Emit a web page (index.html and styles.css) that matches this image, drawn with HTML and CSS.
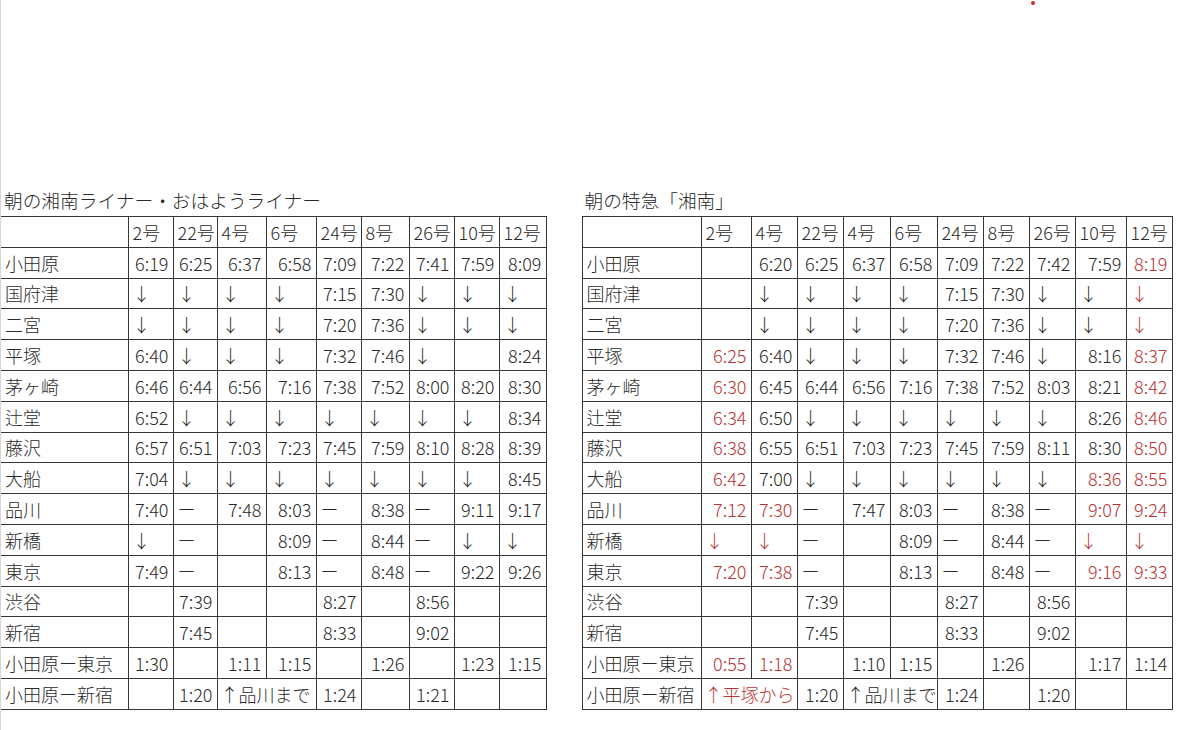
FILE: index.html
```html
<!DOCTYPE html>
<html lang="ja">
<head>
<meta charset="utf-8">
<link rel="stylesheet" href="styles.css">
</head>
<body>
<div class="page">
  <span class="dot"></span>
  <div class="sheet">
    <section class="block block-left">
      <div class="title">朝の湘南ライナー・おはようライナー</div>
      <table class="tt tt-left">
        <colgroup>
          <col style="width:127px"><col style="width:45px"><col style="width:44px"><col style="width:49px"><col style="width:50px"><col style="width:45px"><col style="width:48px"><col style="width:45px"><col style="width:45px"><col style="width:47px">
        </colgroup>
        <tr><td></td><td>2号</td><td>22号</td><td>4号</td><td>6号</td><td>24号</td><td>8号</td><td>26号</td><td>10号</td><td>12号</td></tr>
        <tr><td>小田原</td><td class="n">6:19</td><td class="n">6:25</td><td class="n">6:37</td><td class="n">6:58</td><td class="n">7:09</td><td class="n">7:22</td><td class="n">7:41</td><td class="n">7:59</td><td class="n">8:09</td></tr>
        <tr><td>国府津</td><td>↓</td><td>↓</td><td>↓</td><td>↓</td><td class="n">7:15</td><td class="n">7:30</td><td>↓</td><td>↓</td><td>↓</td></tr>
        <tr><td>二宮</td><td>↓</td><td>↓</td><td>↓</td><td>↓</td><td class="n">7:20</td><td class="n">7:36</td><td>↓</td><td>↓</td><td>↓</td></tr>
        <tr><td>平塚</td><td class="n">6:40</td><td>↓</td><td>↓</td><td>↓</td><td class="n">7:32</td><td class="n">7:46</td><td>↓</td><td></td><td class="n">8:24</td></tr>
        <tr><td>茅ヶ崎</td><td class="n">6:46</td><td class="n">6:44</td><td class="n">6:56</td><td class="n">7:16</td><td class="n">7:38</td><td class="n">7:52</td><td class="n">8:00</td><td class="n">8:20</td><td class="n">8:30</td></tr>
        <tr><td>辻堂</td><td class="n">6:52</td><td>↓</td><td>↓</td><td>↓</td><td>↓</td><td>↓</td><td>↓</td><td>↓</td><td class="n">8:34</td></tr>
        <tr><td>藤沢</td><td class="n">6:57</td><td class="n">6:51</td><td class="n">7:03</td><td class="n">7:23</td><td class="n">7:45</td><td class="n">7:59</td><td class="n">8:10</td><td class="n">8:28</td><td class="n">8:39</td></tr>
        <tr><td>大船</td><td class="n">7:04</td><td>↓</td><td>↓</td><td>↓</td><td>↓</td><td>↓</td><td>↓</td><td>↓</td><td class="n">8:45</td></tr>
        <tr><td>品川</td><td class="n">7:40</td><td>ー</td><td class="n">7:48</td><td class="n">8:03</td><td>ー</td><td class="n">8:38</td><td>ー</td><td class="n">9:11</td><td class="n">9:17</td></tr>
        <tr><td>新橋</td><td>↓</td><td>ー</td><td></td><td class="n">8:09</td><td>ー</td><td class="n">8:44</td><td>ー</td><td>↓</td><td>↓</td></tr>
        <tr><td>東京</td><td class="n">7:49</td><td>ー</td><td></td><td class="n">8:13</td><td>ー</td><td class="n">8:48</td><td>ー</td><td class="n">9:22</td><td class="n">9:26</td></tr>
        <tr><td>渋谷</td><td></td><td class="n">7:39</td><td></td><td></td><td class="n">8:27</td><td></td><td class="n">8:56</td><td></td><td></td></tr>
        <tr><td>新宿</td><td></td><td class="n">7:45</td><td></td><td></td><td class="n">8:33</td><td></td><td class="n">9:02</td><td></td><td></td></tr>
        <tr><td>小田原ー東京</td><td class="n">1:30</td><td></td><td class="n">1:11</td><td class="n">1:15</td><td></td><td class="n">1:26</td><td></td><td class="n">1:23</td><td class="n">1:15</td></tr>
        <tr><td>小田原ー新宿</td><td></td><td class="n">1:20</td><td colspan="2" class="span">↑品川まで</td><td class="n">1:24</td><td></td><td class="n">1:21</td><td></td><td></td></tr>
      </table>
    </section>
    <section class="block block-right">
      <div class="title">朝の特急「湘南」</div>
      <table class="tt tt-right">
        <colgroup>
          <col style="width:119px"><col style="width:50px"><col style="width:46px"><col style="width:46px"><col style="width:47px"><col style="width:47px"><col style="width:46px"><col style="width:46px"><col style="width:46px"><col style="width:51px"><col style="width:46px">
        </colgroup>
        <tr><td></td><td>2号</td><td>4号</td><td>22号</td><td>4号</td><td>6号</td><td>24号</td><td>8号</td><td>26号</td><td>10号</td><td>12号</td></tr>
        <tr><td>小田原</td><td></td><td class="n">6:20</td><td class="n">6:25</td><td class="n">6:37</td><td class="n">6:58</td><td class="n">7:09</td><td class="n">7:22</td><td class="n">7:42</td><td class="n">7:59</td><td class="n r">8:19</td></tr>
        <tr><td>国府津</td><td></td><td>↓</td><td>↓</td><td>↓</td><td>↓</td><td class="n">7:15</td><td class="n">7:30</td><td>↓</td><td>↓</td><td class="r">↓</td></tr>
        <tr><td>二宮</td><td></td><td>↓</td><td>↓</td><td>↓</td><td>↓</td><td class="n">7:20</td><td class="n">7:36</td><td>↓</td><td>↓</td><td class="r">↓</td></tr>
        <tr><td>平塚</td><td class="n r">6:25</td><td class="n">6:40</td><td>↓</td><td>↓</td><td>↓</td><td class="n">7:32</td><td class="n">7:46</td><td>↓</td><td class="n">8:16</td><td class="n r">8:37</td></tr>
        <tr><td>茅ヶ崎</td><td class="n r">6:30</td><td class="n">6:45</td><td class="n">6:44</td><td class="n">6:56</td><td class="n">7:16</td><td class="n">7:38</td><td class="n">7:52</td><td class="n">8:03</td><td class="n">8:21</td><td class="n r">8:42</td></tr>
        <tr><td>辻堂</td><td class="n r">6:34</td><td class="n">6:50</td><td>↓</td><td>↓</td><td>↓</td><td>↓</td><td>↓</td><td>↓</td><td class="n">8:26</td><td class="n r">8:46</td></tr>
        <tr><td>藤沢</td><td class="n r">6:38</td><td class="n">6:55</td><td class="n">6:51</td><td class="n">7:03</td><td class="n">7:23</td><td class="n">7:45</td><td class="n">7:59</td><td class="n">8:11</td><td class="n">8:30</td><td class="n r">8:50</td></tr>
        <tr><td>大船</td><td class="n r">6:42</td><td class="n">7:00</td><td>↓</td><td>↓</td><td>↓</td><td>↓</td><td>↓</td><td>↓</td><td class="n r">8:36</td><td class="n r">8:55</td></tr>
        <tr><td>品川</td><td class="n r">7:12</td><td class="n r">7:30</td><td>ー</td><td class="n">7:47</td><td class="n">8:03</td><td>ー</td><td class="n">8:38</td><td>ー</td><td class="n r">9:07</td><td class="n r">9:24</td></tr>
        <tr><td>新橋</td><td class="r">↓</td><td class="r">↓</td><td>ー</td><td></td><td class="n">8:09</td><td>ー</td><td class="n">8:44</td><td>ー</td><td class="r">↓</td><td class="r">↓</td></tr>
        <tr><td>東京</td><td class="n r">7:20</td><td class="n r">7:38</td><td>ー</td><td></td><td class="n">8:13</td><td>ー</td><td class="n">8:48</td><td>ー</td><td class="n r">9:16</td><td class="n r">9:33</td></tr>
        <tr><td>渋谷</td><td></td><td></td><td class="n">7:39</td><td></td><td></td><td class="n">8:27</td><td></td><td class="n">8:56</td><td></td><td></td></tr>
        <tr><td>新宿</td><td></td><td></td><td class="n">7:45</td><td></td><td></td><td class="n">8:33</td><td></td><td class="n">9:02</td><td></td><td></td></tr>
        <tr><td>小田原ー東京</td><td class="n r">0:55</td><td class="n r">1:18</td><td></td><td class="n">1:10</td><td class="n">1:15</td><td></td><td class="n">1:26</td><td></td><td class="n">1:17</td><td class="n">1:14</td></tr>
        <tr><td>小田原ー新宿</td><td colspan="2" class="span r">↑平塚から</td><td class="n">1:20</td><td colspan="2" class="span">↑品川まで</td><td class="n">1:24</td><td></td><td class="n">1:20</td><td></td><td></td></tr>
      </table>
    </section>
  </div>
</div>
</body>
</html>
```
FILE: styles.css
```css
html, body {
  margin: 0;
  padding: 0;
  background: #ffffff;
}
body {
  font-family: "Noto Sans CJK JP", "Noto Sans", sans-serif;
  color: #2a2a2a;
}
.page {
  position: relative;
  width: 1199px;
  height: 730px;
  border-left: 1px solid #d6d6d6;
  box-sizing: border-box;
  overflow: hidden;
}
.dot {
  position: absolute;
  left: 1030px;
  top: 1px;
  width: 4px;
  height: 4px;
  border-radius: 50%;
  background: #d02626;
}
.sheet {
  display: flex;
  align-items: flex-start;
  padding-top: 188px;
  gap: 35px;
}
.title {
  font-size: 18.7px;
  line-height: 24px;
  height: 24px;
  padding-left: 3px;
  margin-bottom: 4px;
  white-space: nowrap;
  font-weight: 300;
}
.tt {
  border-collapse: collapse;
  table-layout: fixed;
  font-size: 18px;
  font-weight: 300;
}
.tt-left {
  width: 545px;
}
.tt-right {
  width: 590px;
}
.tt td {
  border: 1px solid #363636;
  height: 29.8px;
  padding: 0 3px 0 4px;
  line-height: 24px;
  white-space: nowrap;
  overflow: hidden;
  text-align: left;
  vertical-align: middle;
}
.tt-left td:first-child {
  border-left: none;
}
.tt td.n {
  text-align: right;
  padding: 0 4px 0 2px;
}
.tt td.span {
  padding-left: 3px;
  overflow: visible;
}
.tt td.r {
  color: #b93434;
}
```
